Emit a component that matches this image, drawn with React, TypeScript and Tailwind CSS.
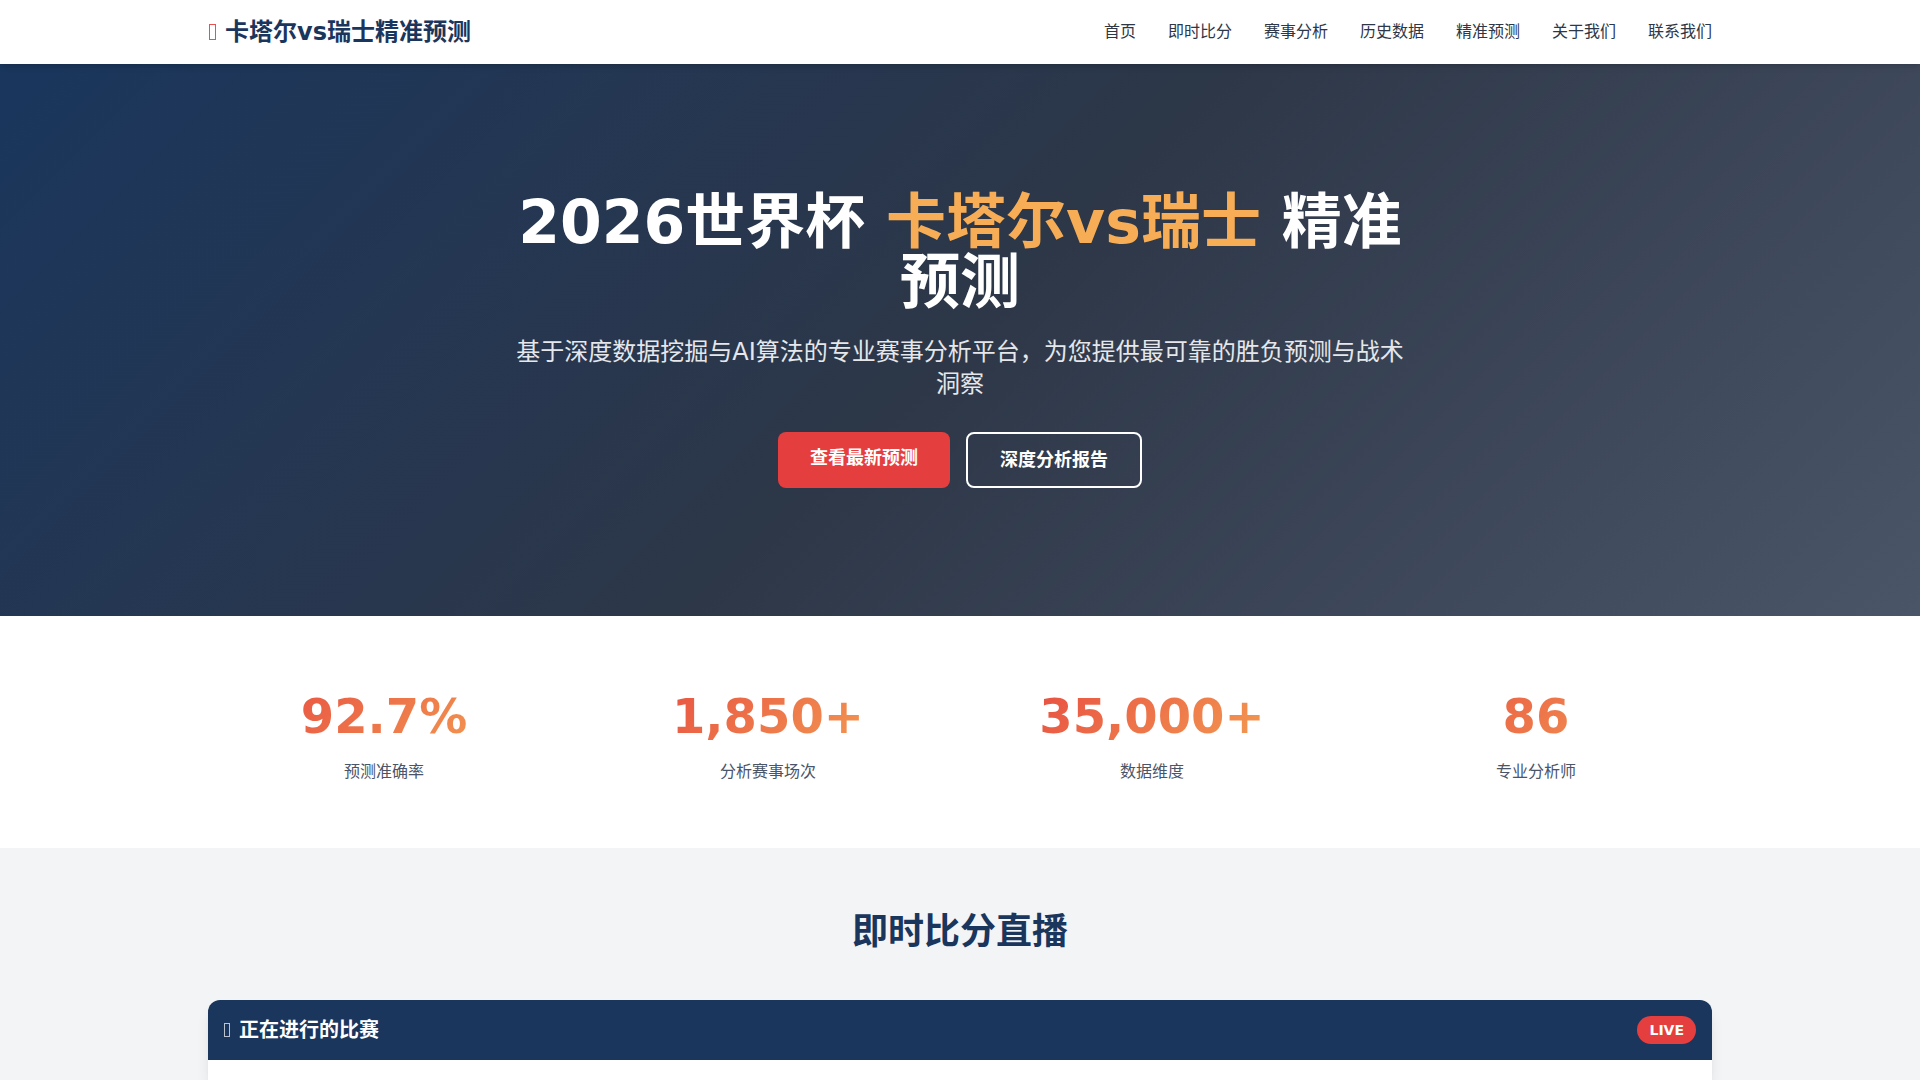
const navItems = ["首页", "即时比分", "赛事分析", "历史数据", "精准预测", "关于我们", "联系我们"];

const stats = [
  { value: "92.7%", label: "预测准确率" },
  { value: "1,850+", label: "分析赛事场次" },
  { value: "35,000+", label: "数据维度" },
  { value: "86", label: "专业分析师" },
];

function Header() {
  return (
    <header className="sticky top-0 z-10 bg-white shadow-md">
      <div className="mx-auto flex h-16 max-w-[1536px] items-center justify-between px-4">
        <a href="#" className="flex items-center gap-2 text-2xl font-bold text-[#1a365d]">
          <span className="flex w-[9px] justify-center" aria-hidden="true">
            <span className="h-4 w-[7px] border border-[#e53e3e]/90" />
          </span>
          <span>卡塔尔vs瑞士精准预测</span>
        </a>
        <nav className="flex gap-8">
          {navItems.map((item) => (
            <a key={item} href="#" className="text-[#2d3748]">
              {item}
            </a>
          ))}
        </nav>
      </div>
    </header>
  );
}

function Hero() {
  return (
    <section className="bg-[linear-gradient(135deg,#1a365d_0%,#2d3748_50%,#4a5568_100%)] px-4 py-32 text-white">
      <div className="mx-auto max-w-4xl text-center">
        <h1 className="mb-6 text-6xl leading-none font-bold">
          2026世界杯 <span className="text-[#f6ad55]">卡塔尔vs瑞士</span> 精准预测
        </h1>
        <p className="mb-8 text-2xl text-gray-200">
          基于深度数据挖掘与AI算法的专业赛事分析平台，为您提供最可靠的胜负预测与战术洞察
        </p>
        <div className="flex justify-center gap-4">
          <a href="#" className="rounded-lg bg-[#e53e3e] px-8 py-3 text-lg font-bold">
            查看最新预测
          </a>
          <a href="#" className="rounded-lg border-2 border-white px-8 py-3 text-lg font-bold">
            深度分析报告
          </a>
        </div>
      </div>
    </section>
  );
}

function Stats() {
  return (
    <section className="bg-white py-16">
      <div className="mx-auto grid max-w-[1536px] grid-cols-4 gap-8 px-4 text-center">
        {stats.map((stat) => (
          <div key={stat.label}>
            <div className="mb-2 bg-[linear-gradient(135deg,#e53e3e,#f6ad55)] bg-clip-text text-5xl leading-[72px] font-bold text-transparent">
              {stat.value}
            </div>
            <div className="text-[#4a5568]">{stat.label}</div>
          </div>
        ))}
      </div>
    </section>
  );
}

function LiveScores() {
  return (
    <section className="flex flex-1 flex-col bg-gray-100 pt-16">
      <div className="mx-auto flex w-full max-w-[1536px] flex-1 flex-col px-4">
        <h2 className="mb-12 text-center text-4xl font-bold text-[#1a365d]">即时比分直播</h2>
        <div className="flex-1 rounded-t-xl bg-white shadow-lg">
          <div className="flex items-center justify-between rounded-t-xl bg-[#1a365d] p-4 text-white">
            <h3 className="flex items-center gap-2 text-xl font-bold">
              <span className="flex w-[7px]" aria-hidden="true">
                <span className="h-[14px] w-[6px] border border-white/70" />
              </span>
              正在进行的比赛
            </h3>
            <span className="rounded-full bg-[#e53e3e] px-3 py-1 text-sm font-bold">LIVE</span>
          </div>
        </div>
      </div>
    </section>
  );
}

export default function App() {
  return (
    <div
      lang="zh-CN"
      className="flex min-h-screen flex-col bg-gray-100 font-['DejaVu_Sans','Noto_Sans_CJK_SC',sans-serif]"
    >
      <Header />
      <Hero />
      <Stats />
      <LiveScores />
    </div>
  );
}
